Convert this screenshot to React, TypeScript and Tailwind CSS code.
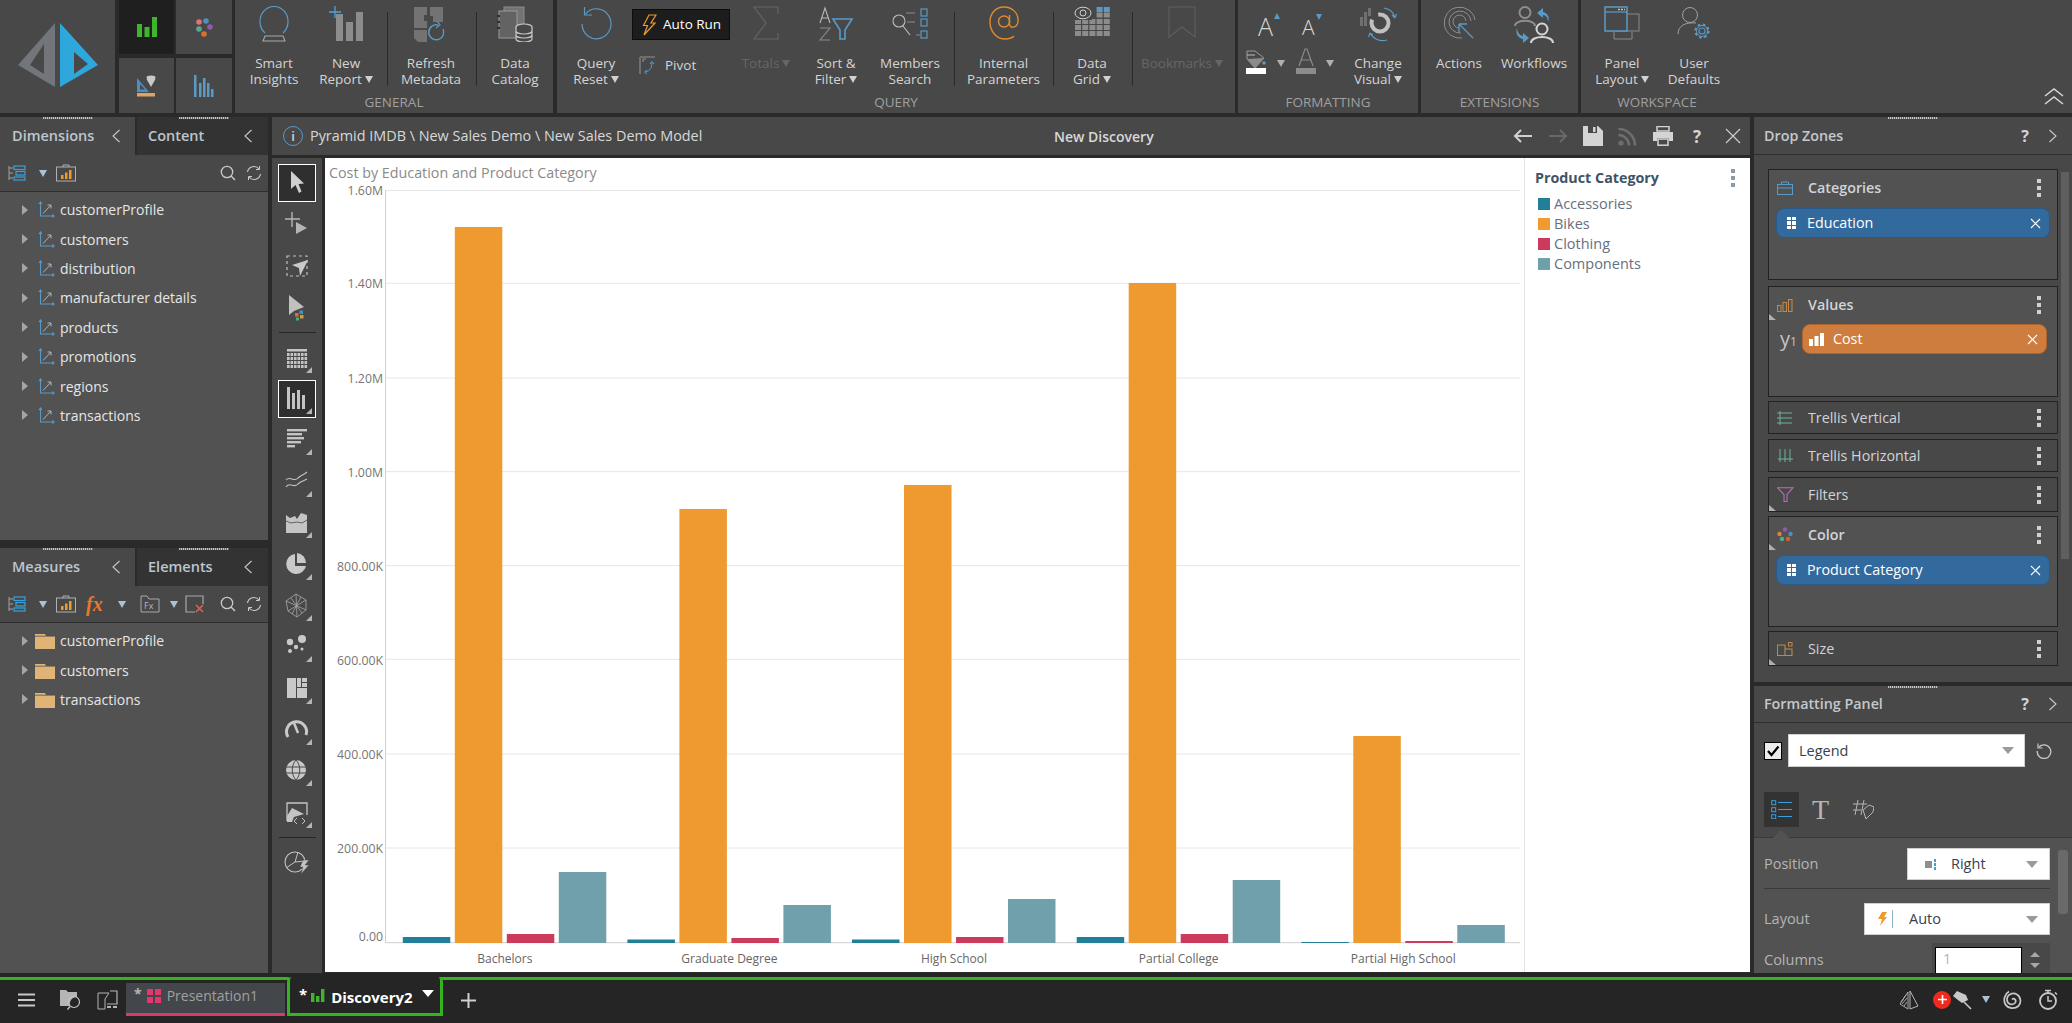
import React from "react";

const G = "#8c8c8c";
const B = "#5a9ac6";
const L = "#c9c9c9";

const Svg = ({ w = 36, h = 36, children, className = "" }: { w?: number; h?: number; children: React.ReactNode; className?: string }) => (
  <svg width={w} height={h} viewBox={`0 0 ${w} ${h}`} fill="none" className={className}>
    {children}
  </svg>
);

const Caret = ({ dim = false }: { dim?: boolean }) => (
  <span className={`ml-[3px] inline-block align-[1px] w-0 h-0 border-l-[4px] border-r-[4px] border-t-[7px] border-l-transparent border-r-transparent ${dim ? "border-t-[#666666]" : "border-t-[#d0d0d0]"}`} />
);

const Sep = ({ className }: { className: string }) => (
  <div className={`${className} flex justify-center pt-[12px]`}>
    <div className="w-[1px] h-[74px] bg-[#2a2a2a]" />
  </div>
);

const Item = ({ w, l1, l2, caret, icon, dim, ml = "" }: { w: string; l1: string; l2?: string; caret?: boolean; icon: React.ReactNode; dim?: boolean; ml?: string }) => (
  <div className={`${w} ${ml} flex flex-col items-center shrink-0`}>
    <div className="h-[55px] pt-[6px] flex justify-center">{icon}</div>
    <div className={`text-[13.5px] leading-[16px] text-center whitespace-nowrap ${dim ? "text-[#666666]" : "text-[#d4d4d4]"}`}>
      <div>
        {l1}
        {!l2 && caret && <Caret dim={dim} />}
      </div>
      {l2 && (
        <div>
          {l2}
          {caret && <Caret />}
        </div>
      )}
    </div>
  </div>
);

const Section = ({ w, label, children }: { w: string; label: string; children: React.ReactNode }) => (
  <div className={`${w} h-[113px] bg-[#484848] flex flex-col shrink-0`}>
    <div className="h-[92px] flex">{children}</div>
    <div className="h-[21px] text-center text-[13.5px] leading-[20px] text-[#a0a0a0]">{label}</div>
  </div>
);

const Bars = ({ fill, x = 0, y = 0 }: { fill: string; x?: number; y?: number }) => (
  <g fill={fill} transform={`translate(${x} ${y})`}>
    <rect x="0" y="7" width="5" height="13" />
    <rect x="7.5" y="10" width="5" height="10" />
    <rect x="15" y="0" width="5" height="20" />
  </g>
);

const TriCorner = () => <polygon points="30,30 30,24 24,30" fill="#b5b5b5" />;

const ToolBtn = ({ sel, children }: { sel?: boolean; children: React.ReactNode }) => (
  <div className={`w-[38px] h-[38px] mb-[3.4px] flex items-center justify-center shrink-0 ${sel ? "bg-[#2f2f2f] border border-white" : ""}`}>
    <Svg w={30} h={30}>{children}</Svg>
  </div>
);

const Grip = ({ className }: { className: string }) => (
  <div className={`absolute top-0 h-[2px] w-[50px] bg-[repeating-linear-gradient(90deg,#c4c4c4_0px,#c4c4c4_1px,#6a6a6a_1px,#6a6a6a_2px)] ${className}`} />
);

const Chevron = ({ dir = "left", color = "#c9c9c9" }: { dir?: "left" | "right"; color?: string }) => (
  <Svg w={10} h={16}>
    <path d={dir === "left" ? "M8.5 2 L2 8 L8.5 14" : "M1.5 2 L8 8 L1.5 14"} stroke={color} strokeWidth="1.1" />
  </Svg>
);

const TreeAxes = () => (
  <Svg w={17} h={17}>
    <path d="M2.5 1 V15 H16 M1 3 L2.5 1 L4 3 M14.5 13.5 L16 15 L14.5 16.5" stroke={B} strokeWidth="1.1" />
    <path d="M5 12.5 L13 4 M9.5 4 H13 V7.5" stroke="#a8b8c4" strokeWidth="1" />
  </Svg>
);

const TreeRow = ({ text, folder }: { text: string; folder?: boolean }) => (
  <div className="h-[29.4px] flex items-center text-[14px] text-[#e6e6e6] whitespace-nowrap">
    <div className="w-[22px] shrink-0" />
    <div className="w-0 h-0 border-t-[5px] border-b-[5px] border-l-[6px] border-t-transparent border-b-transparent border-l-[#a5a5a5] shrink-0" />
    {folder ? (
      <div className="ml-[7px] w-[25px] shrink-0">
        <Svg w={20} h={17}>
          <path d="M0 2 H10 L11 4 H20 V17 H0 Z" fill="#e0b377" />
          <path d="M0 4.2 H20" stroke="#525252" strokeWidth="0.8" />
        </Svg>
      </div>
    ) : (
      <div className="ml-[10px] w-[22px] shrink-0">
        <TreeAxes />
      </div>
    )}
    <span>{text}</span>
  </div>
);

const HierIcon = () => (
  <Svg w={18} h={16}>
    <path d="M1 1 V15 M1 3 H5 M1 8 H5 M1 13 H5" stroke="#a0a0a0" strokeWidth="1" />
    <rect x="6" y="1" width="11" height="3.5" stroke="#39a0dd" strokeWidth="1.2" />
    <rect x="8" y="6.5" width="9" height="3.5" stroke="#39a0dd" strokeWidth="1.2" />
    <rect x="6" y="12" width="11" height="3" stroke="#39a0dd" strokeWidth="1.2" />
  </Svg>
);

const CaseIcon = () => (
  <Svg w={20} h={18}>
    <path d="M7 3 V1 H13 V3" stroke="#b0b0b0" strokeWidth="1" />
    <rect x="0.5" y="3" width="19" height="14" stroke="#b0b0b0" strokeWidth="1" />
    <rect x="5" y="11" width="2.5" height="4" fill="#ec9b2c" />
    <rect x="9" y="8.5" width="2.5" height="6.5" fill="#ec9b2c" />
    <rect x="13" y="6" width="2.5" height="9" fill="#ec9b2c" />
  </Svg>
);

const SearchRefresh = () => (
  <>
    <div className="ml-auto">
      <Svg w={16} h={16}>
        <circle cx="7" cy="7" r="5.7" stroke={L} strokeWidth="1.3" />
        <path d="M11 11 L15 15" stroke={L} strokeWidth="1.4" />
      </Svg>
    </div>
    <div className="ml-[10px]">
      <Svg w={16} h={16}>
        <path d="M1.5 7 A6.5 6.5 0 0 1 13 4 M14.5 9 A6.5 6.5 0 0 1 3 12" stroke={L} strokeWidth="1.2" />
        <path d="M13.5 1 V4.5 H10 M2.5 15 V11.5 H6" stroke={L} strokeWidth="1" />
      </Svg>
    </div>
  </>
);

const DownTri = ({ color = "#a9c2d6" }: { color?: string }) => (
  <span className="inline-block w-0 h-0 border-l-[4px] border-r-[4px] border-t-[7px] border-l-transparent border-r-transparent" style={{ borderTopColor: color }} />
);

const PanelTabs = ({ a, b }: { a: string; b: string }) => (
  <div className="h-[38px] flex relative shrink-0">
    <Grip className="left-[43px]" />
    <Grip className="left-[179px]" />
    <div className="w-[135px] bg-[#484848] flex items-center pl-[12px] pr-[14px] justify-between">
      <span className="text-[14.5px] font-semibold text-[#bcc6ce]">{a}</span>
      <Chevron />
    </div>
    <div className="w-[2px] bg-[#2a2a2a]" />
    <div className="flex-1 bg-[#333333] flex items-center pl-[11px] pr-[15px] justify-between">
      <span className="text-[14.5px] font-semibold text-[#bcc6ce]">{b}</span>
      <Chevron />
    </div>
  </div>
);

const Kebab = ({ color = "#d0d0d0" }: { color?: string }) => (
  <div className="flex flex-col gap-[3px]">
    <div className="w-[4px] h-[4px]" style={{ background: color }} />
    <div className="w-[4px] h-[4px]" style={{ background: color }} />
    <div className="w-[4px] h-[4px]" style={{ background: color }} />
  </div>
);

const X = ({ s = 11 }: { s?: number }) => (
  <svg width={s} height={s} viewBox="0 0 11 11">
    <path d="M1 1 L10 10 M10 1 L1 10" stroke="#fff" strokeWidth="1.2" />
  </svg>
);

const Corner = () => (
  <svg width="7" height="6" viewBox="0 0 7 6" className="absolute left-0 bottom-0">
    <polygon points="0,0 7,6 0,6" fill="#b0b0b0" />
  </svg>
);

const Zone = ({ h, active, icon, label, children, corner, cornerClass }: { h: string; active?: boolean; icon: React.ReactNode; label: string; children?: React.ReactNode; corner?: boolean; cornerClass?: string }) => (
  <div className={`${h} w-[290px] relative border border-[#222222] ${active ? "bg-[#525252]" : "bg-[#484848]"}`}>
    <div className={`flex items-center pl-[8px] pr-[16px] ${active ? "h-[35px]" : "h-full"}`}>
      <div className="w-[31px] shrink-0 flex">{icon}</div>
      <span className={`text-[14.3px] text-[#d0d4d8] ${active ? "font-semibold" : ""}`}>{label}</span>
      <div className="ml-auto">
        <Kebab />
      </div>
    </div>
    {children}
    {corner && <Corner />}
    {cornerClass && (
      <svg width="7" height="6" viewBox="0 0 7 6" className={`absolute left-0 ${cornerClass}`}>
        <polygon points="0,0 7,6 0,6" fill="#b0b0b0" />
      </svg>
    )}
  </div>
);

const Chip = ({ text }: { text: string }) => (
  <div className="mx-[7px] mt-[3px] h-[30px] rounded-[8px] bg-[#326a9e] border border-[#2a5a88] flex items-center pl-[10px] pr-[8px] text-[14.3px] text-white">
    <div className="grid grid-cols-2 gap-[1px] w-[9px] mr-[11px] shrink-0">
      {[0, 1, 2, 3, 4, 5].map((i) => (
        <div key={i} className="h-[3.3px] bg-white" />
      ))}
    </div>
    <span>{text}</span>
    <div className="ml-auto">
      <X />
    </div>
  </div>
);

const SelectBox = ({ w, children }: { w: string; children: React.ReactNode }) => (
  <div className={`${w} h-[32px] bg-white border border-[#cfcfcf] flex items-center text-[14.5px] text-[#374151] shrink-0`}>
    {children}
    <div className="ml-auto mr-[11px]">
      <span className="block w-0 h-0 border-l-[6px] border-r-[6px] border-t-[7px] border-l-transparent border-r-transparent border-t-[#9a9a9a]" />
    </div>
  </div>
);

const series = ["#237e9a", "#ee9a2e", "#cc3a5c", "#70a0ac"];
const groups = [
  { name: "Bachelors", c: 504.8, tops: [937, 227, 934, 872] },
  { name: "Graduate Degree", c: 729.4, tops: [939.5, 509, 938, 905] },
  { name: "High School", c: 954, tops: [939.5, 485, 937, 899] },
  { name: "Partial College", c: 1178.7, tops: [937, 283, 934, 880] },
  { name: "Partial High School", c: 1403.3, tops: [942, 736, 941, 925] },
];
const ticks = [
  { t: "1.60M", g: 190.5, l: 190 },
  { t: "1.40M", g: 283.3, l: 283.5 },
  { t: "1.20M", g: 378, l: 378 },
  { t: "1.00M", g: 471.7, l: 472 },
  { t: "800.00K", g: 565.7, l: 566 },
  { t: "600.00K", g: 659.3, l: 660 },
  { t: "400.00K", g: 754, l: 754 },
  { t: "200.00K", g: 848, l: 848 },
  { t: "0.00", g: 942.7, l: 936 },
];

const Chart = () => (
  <svg width="1199" height="814" viewBox="325 158 1199 814" className="shrink-0 block">
    <text x="329" y="178" fontSize="14.3" fill="#8a8a8a">Cost by Education and Product Category</text>
    {ticks.map((t) => (
      <g key={t.t}>
        <line x1="386" x2="1520" y1={t.g} y2={t.g} stroke={t.t === "0.00" ? "#cfcfcf" : "#e6e6e6"} strokeWidth="1" />
        <text x="383" y={t.l + 4.5} fontSize="12.3" fill="#757575" textAnchor="end">{t.t}</text>
      </g>
    ))}
    <line x1="385.5" x2="385.5" y1="190" y2="943" stroke="#cfcfcf" />
    {groups.map((g) => (
      <g key={g.name}>
        {g.tops.map((top, i) => (
          <rect key={i} x={g.c - 102 + i * 52} y={top} width="47.5" height={943 - top} fill={series[i]} />
        ))}
        <text x={g.c} y="963" fontSize="12" fill="#666666" textAnchor="middle">{g.name}</text>
      </g>
    ))}
  </svg>
);

const Legend = () => (
  <div className="flex-1 border-l border-[#e4e4e4] pl-[10px] pr-[15px] pt-[10px] relative">
    <div className="flex items-center justify-between h-[20px]">
      <span className="text-[14.3px] font-bold text-[#3f5365]">Product Category</span>
      <Kebab color="#8a9aa8" />
    </div>
    <div className="mt-[6px]">
      {["Accessories", "Bikes", "Clothing", "Components"].map((n, i) => (
        <div key={n} className="h-[20px] flex items-center pl-[3px] text-[14.5px] text-[#667080]">
          <div className="w-[12px] h-[12px] mr-[4px]" style={{ background: series[i] }} />
          {n}
        </div>
      ))}
    </div>
  </div>
);

const HdrIcons = () => (
  <div className="flex items-center">
    <Svg w={20} h={16}>
      <path d="M19 8 H2 M8 2 L2 8 L8 14" stroke="#d0d0d0" strokeWidth="2" />
    </Svg>
    <div className="ml-[15px]">
      <Svg w={20} h={16}>
        <path d="M1 8 H18 M12 2 L18 8 L12 14" stroke="#686868" strokeWidth="2" />
      </Svg>
    </div>
    <div className="ml-[15px]">
      <Svg w={20} h={20}>
        <path d="M0 0 H15 L20 5 V20 H0 Z" fill="#d4d4d4" />
        <rect x="5" y="0" width="9" height="7" fill="#484848" />
        <rect x="10" y="1" width="2.5" height="5" fill="#d4d4d4" />
      </Svg>
    </div>
    <div className="ml-[15px]">
      <Svg w={20} h={20}>
        <circle cx="3" cy="17" r="2.6" fill="#6e6e6e" />
        <path d="M0.5 9 A10.5 10.5 0 0 1 11 19.5 M0.5 3 A16.5 16.5 0 0 1 17 19.5" stroke="#6e6e6e" strokeWidth="2.6" />
      </Svg>
    </div>
    <div className="ml-[15px]">
      <Svg w={20} h={20}>
        <path d="M4 0.5 H16 V5 H4 Z" stroke="#d4d4d4" strokeWidth="1.5" />
        <path d="M0 6 H20 V15 H16 V12 H4 V15 H0 Z" fill="#d4d4d4" />
        <rect x="5" y="13" width="10" height="6.2" stroke="#d4d4d4" strokeWidth="1.5" />
      </Svg>
    </div>
    <span className="ml-[20px] w-[12px] text-[17px] font-bold text-[#d4d4d4] leading-none">?</span>
    <div className="ml-[20px] mr-[9px]">
      <Svg w={16} h={16}>
        <path d="M1 1 L15 15 M15 1 L1 15" stroke="#d0d0d0" strokeWidth="1.1" />
      </Svg>
    </div>
  </div>
);

const HelpClose = () => (
  <div className="flex items-center">
    <span className="text-[16px] font-bold text-[#d4d4d4] leading-none">?</span>
    <div className="ml-[19px]">
      <Chevron dir="right" />
    </div>
  </div>
);

export default function App() {
  return (
    <div className="w-[2072px] h-[1023px] overflow-hidden bg-[#2a2a2a] flex flex-col font-['Open_Sans',sans-serif] select-none">
      {/* Ribbon */}
      <div className="h-[113px] mb-[4px] flex shrink-0">
        <div className="w-[115px] bg-[#484848] shrink-0 flex">
          <Svg w={115} h={113}>
            <path fillRule="evenodd" d="M55 23 L55 87 L18 65 Z M44 44 L30 65 L44 74 Z" fill="#72757a" />
            <path fillRule="evenodd" d="M60 23 L98 65 L60 87 Z M74 52 L74 74 L88 64 Z" fill="#2ea8dc" />
          </Svg>
        </div>
        <div className="w-[4px] shrink-0" />
        <div className="w-[113px] shrink-0 mr-[3px] grid grid-cols-[55px_56px] grid-rows-[54px_55px] gap-x-[2px] gap-y-[4px]">
          <div className="bg-[#1f1f1f] flex items-center justify-center">
            <Svg w={20} h={20}>
              <Bars fill="#3fb52f" />
            </Svg>
          </div>
          <div className="bg-[#484848] flex items-center justify-center">
            <Svg w={20} h={20}>
              <circle cx="5" cy="5" r="2.8" fill="#e0707a" />
              <circle cx="12" cy="4" r="2.8" fill="#4f8ec0" />
              <circle cx="16" cy="10" r="2.8" fill="#8e5bb0" />
              <circle cx="5" cy="12" r="2.8" fill="#5ba88c" />
              <circle cx="10" cy="17" r="2.8" fill="#d9702c" />
            </Svg>
          </div>
          <div className="bg-[#484848] flex items-center justify-center">
            <Svg w={22} h={22}>
              <path d="M1 17 L1 3 L13 17 Z M4 9 V14.5 H9 Z" fill="#4f8ec0" fillRule="evenodd" />
              <ellipse cx="15" cy="2.5" rx="4.5" ry="2" fill="#c9c9c9" />
              <path d="M10.5 4 L15 12 L19.5 4 Z" fill="#c9c9c9" />
              <rect x="1" y="18" width="18" height="3.5" fill="#d9a66a" />
            </Svg>
          </div>
          <div className="bg-[#484848] flex items-center justify-center">
            <Svg w={20} h={26}>
              <g fill="#5a9ac6">
                <rect x="0" y="2" width="2.5" height="22" />
                <rect x="5" y="10" width="2.5" height="14" />
                <rect x="9" y="5" width="2.5" height="19" />
                <rect x="13" y="10" width="2.5" height="14" />
                <rect x="17" y="16" width="2.5" height="8" />
              </g>
            </Svg>
          </div>
        </div>

        <Section w="w-[318px]" label="GENERAL">
          <Item w="w-[78px]" l1="Smart" l2="Insights" icon={
            <Svg>
              <path d="M9 27 A14 15 0 1 1 27 27" stroke={B} strokeWidth="1.2" />
              <path d="M9 30 H27 L29 35 H7 Z" stroke="#a8a8a8" strokeWidth="1.1" />
            </Svg>
          } />
          <Item w="w-[66px]" l1="New" l2="Report" caret icon={
            <Svg>
              <path d="M7 0 V12 M1 6 H13" stroke="#4da3dc" strokeWidth="1.3" />
              <rect x="8" y="8" width="7" height="27" fill={G} />
              <rect x="18" y="16" width="7" height="19" fill={G} />
              <rect x="28" y="6" width="7" height="29" fill={G} />
            </Svg>
          } />
          <Sep className="w-[16px]" />
          <Item w="w-[72px]" l1="Refresh" l2="Metadata" icon={
            <Svg>
              <path d="M1 1 H14 V9 H11 V15 H14 V22 H1 Z" fill="#737373" />
              <path d="M17 1 H30 V16 H20 V10 H17 Z" fill="#737373" />
              <path d="M1 24 H14 V36 H5 L1 32 Z" fill="#737373" />
              <path d="M30 23 A7.5 7.5 0 1 1 25 19" stroke={B} strokeWidth="1.4" />
              <path d="M24 15 L27 19 L23 22" stroke={B} strokeWidth="1.2" />
            </Svg>
          } />
          <Sep className="w-[18px]" />
          <Item w="w-[60px]" l1="Data" l2="Catalog" icon={
            <Svg>
              <rect x="7" y="1" width="20" height="30" fill="#737373" stroke="#8c8c8c" />
              <rect x="2" y="5" width="18" height="27" fill="#636363" stroke="#9a9a9a" />
              <g fill="#2f2f2f"><rect x="0" y="9" width="3" height="2" /><rect x="0" y="15" width="3" height="2" /><rect x="0" y="21" width="3" height="2" /></g>
              <ellipse cx="27" cy="21" rx="8" ry="3" fill="#484848" stroke="#c9c9c9" strokeWidth="1.2" />
              <path d="M19 21 V33 A8 3 0 0 0 35 33 V21 M19 25 A8 3 0 0 0 35 25 M19 29 A8 3 0 0 0 35 29" fill="#484848" stroke="#c9c9c9" strokeWidth="1.2" />
            </Svg>
          } />
        </Section>
        <div className="w-[4px] shrink-0" />

        <Section w="w-[678px]" label="QUERY">
          <Item w="w-[60px]" ml="ml-[9px]" l1="Query" l2="Reset" caret icon={
            <Svg w={32} h={34}>
              <path d="M5.5 8 A14.5 15 0 1 1 2 18" stroke={B} strokeWidth="1.2" />
              <path d="M4.5 1 V9 H12" stroke={B} strokeWidth="1.2" />
            </Svg>
          } />
          <div className="ml-[6px] w-[98px] shrink-0 flex flex-col">
            <div className="mt-[9px] h-[31px] bg-[#1d1d1d] border border-[#0d0d0d] flex items-center pl-[8px]">
              <Svg w={16} h={22}>
                <path d="M8 1 H15 L10 9 H14 L3 21 L6.5 11.5 H2.5 Z" stroke="#ec9b2c" strokeWidth="1.2" />
              </Svg>
              <span className="ml-[6px] text-[13.5px] text-white">Auto Run</span>
            </div>
            <div className="mt-[15px] pl-[7px] flex items-center">
              <Svg w={17} h={19}>
                <path d="M1 1 H16 M1 1 V18 M4 3 H7 M4 3 V6" stroke="#7a7a7a" strokeWidth="1.6" />
                <path d="M13 6 C13 12 11 15 6 16 M11 8 L13 5.5 L15 8 M8 14 L5.5 16 L8 18" stroke={B} strokeWidth="1" />
              </Svg>
              <span className="ml-[9px] text-[13.5px] text-[#d4d4d4]">Pivot</span>
            </div>
          </div>
          <Item w="w-[72px]" l1="Totals" caret dim icon={
            <Svg w={26} h={34}>
              <path d="M25 8 V1 H1 L13 17 L1 33 H25 V27" stroke="#646464" strokeWidth="1.2" />
            </Svg>
          } />
          <Item w="w-[68px]" l1="Sort &" l2="Filter" caret icon={
            <Svg w={36} h={36}>
              <path d="M2 17 L7 2 L12 17 M4 12 H10" stroke="#b8b8b8" strokeWidth="1.1" />
              <path d="M2 22 H12 L2 34 H12" stroke="#8a8a8a" strokeWidth="1.1" />
              <path d="M15 13 H34 L27 24 V33 H22 V24 Z" stroke={B} strokeWidth="1.6" />
            </Svg>
          } />
          <Item w="w-[80px]" l1="Members" l2="Search" icon={
            <Svg w={36} h={36}>
              <circle cx="7" cy="15" r="6" stroke="#bcbcbc" strokeWidth="1.1" />
              <path d="M11 20 L18 29" stroke="#bcbcbc" strokeWidth="1.2" />
              <path d="M14 7 H23 M15 16 H23 M24 29 H28" stroke="#8a8a8a" strokeWidth="1.2" />
              <rect x="29" y="3" width="6" height="7" stroke={B} strokeWidth="1.2" />
              <rect x="29" y="13" width="6" height="7" stroke={B} strokeWidth="1.2" />
              <rect x="29" y="25" width="6" height="7" stroke={B} strokeWidth="1.2" />
            </Svg>
          } />
          <Sep className="w-[8px]" />
          <Item w="w-[91px]" l1="Internal" l2="Parameters" icon={
            <Svg w={32} h={34}>
              <circle cx="16" cy="15.5" r="5.5" stroke="#e08a2c" strokeWidth="1.4" />
              <path d="M21.5 9 V18 C21.5 23 29 22 30 16 C31 7 24 1 16 1 C7 1 2 8 2 16 C2 26 9 33 17 33 C21 33 24 32 26 30" stroke="#e08a2c" strokeWidth="1.4" />
            </Svg>
          } />
          <Sep className="w-[8px]" />
          <Item w="w-[70px]" l1="Data" l2="Grid" caret icon={
            <Svg w={36} h={32}>
              <g fill={G}>
                {[0, 1, 2, 3].map((r) =>
                  [0, 1, 2, 3, 4].map((c) =>
                    r === 0 && c < 3 ? null : (
                      <rect key={`${r}-${c}`} x={1 + c * 7.2} y={r === 0 ? 1 : 7 + r * 6} width="6" height="5" fill={r === 0 ? B : G} />
                    )
                  )
                )}
                {[0, 1, 2, 3, 4].map((c) => (c > 2 ? <rect key={c} x={1 + c * 7.2} y="6.5" width="6" height="5" /> : null))}
              </g>
              <rect x="0" y="0" width="18" height="14" fill="#484848" />
              <ellipse cx="9" cy="7" rx="8" ry="5.8" stroke="#cfcfcf" strokeWidth="1" />
              <circle cx="9" cy="7" r="3" stroke="#cfcfcf" strokeWidth="1" />
            </Svg>
          } />
          <Sep className="w-[10px]" />
          <Item w="w-[90px]" l1="Bookmarks" caret dim icon={
            <Svg w={28} h={32}>
              <path d="M1 1 H27 V31 L14 21 L1 31 Z" stroke="#5e5e5e" strokeWidth="1.2" />
            </Svg>
          } />
        </Section>
        <div className="w-[3px] shrink-0" />

        <Section w="w-[180px]" label="FORMATTING">
          <div className="w-[104px] shrink-0 ml-[6px] flex flex-col">
            <div className="h-[40px] flex pt-[10px]">
              <div className="w-[44px] pl-[14px] flex items-start">
                <span className="text-[25px] leading-[32px] font-light text-[#d8d8d8]">A</span>
                <span className="mt-[3px] ml-[1px] block w-0 h-0 border-l-[3.5px] border-r-[3.5px] border-b-[6px] border-l-transparent border-r-transparent border-b-[#5a9ac6]" />
              </div>
              <div className="ml-[14px] flex items-start pt-[3px]">
                <span className="text-[21px] leading-[28px] font-light text-[#d8d8d8]">A</span>
                <span className="mt-[1px] ml-[1px] block w-0 h-0 border-l-[3.5px] border-r-[3.5px] border-t-[6px] border-l-transparent border-r-transparent border-t-[#5a9ac6]" />
              </div>
            </div>
            <div className="flex items-center mt-[8px]">
              <Svg w={24} h={26}>
                <path d="M3 3 H11 L20 10 L11 20 L3 11 Z" stroke="#9a9a9a" strokeWidth="1" />
                <path d="M3 11 L11 20 L20 10 Z" fill="#8c8c8c" />
                <path d="M3 7 H11" stroke="#bbb" />
                <circle cx="20" cy="15" r="1.8" fill={B} />
                <rect x="2" y="20" width="20" height="6" fill="#ffffff" />
              </Svg>
              <div className="ml-[9px]"><DownTri color="#b0b0b0" /></div>
              <div className="ml-[10px]">
                <Svg w={22} h={26}>
                  <path d="M4 18 L10 1 H12 L18 18 M6 12 H16" stroke="#8a8a8a" strokeWidth="1.2" />
                  <rect x="1" y="20" width="20" height="6" fill="#8c8c8c" />
                </Svg>
              </div>
              <div className="ml-[9px]"><DownTri color="#b0b0b0" /></div>
            </div>
          </div>
          <Item w="w-[60px]" l1="Change" l2="Visual" caret icon={
            <Svg w={38} h={36}>
              <circle cx="21" cy="17" r="8.5" stroke="#c0c0c0" strokeWidth="4" strokeDasharray="30 8" />
              <rect x="1" y="11" width="3" height="9" fill="#707070" />
              <rect x="5" y="6" width="3" height="14" fill="#707070" />
              <rect x="9" y="2" width="3" height="8" fill="#707070" />
              <path d="M25 2 C31 3 35 7 36 12 M36 12 L33 9 M36 12 L37.5 8" stroke={B} strokeWidth="1.1" />
              <path d="M28 34 C21 36 14 33 11 27 M11 27 L14 29 M11 27 L9.5 31" stroke={B} strokeWidth="1.1" />
            </Svg>
          } />
        </Section>
        <div className="w-[3px] shrink-0" />

        <Section w="w-[157px]" label="EXTENSIONS">
          <Item w="w-[56px]" ml="ml-[10px]" l1="Actions" icon={
            <Svg w={34} h={34}>
              <path d="M20 32 A15.5 15.5 0 1 1 33 14" stroke="#8e8e8e" strokeWidth="1" />
              <path d="M19 27 A11 11 0 1 1 29 15" stroke="#8e8e8e" strokeWidth="1" />
              <path d="M17 22 A6.5 6.5 0 1 1 24 15" stroke="#8e8e8e" strokeWidth="1" />
              <path d="M17 18 L31 32 M17 18 V26 M17 18 H25" stroke={B} strokeWidth="1.3" />
            </Svg>
          } />
          <Item w="w-[78px]" ml="ml-[8px]" l1="Workflows" icon={
            <Svg w={40} h={38}>
              <circle cx="11" cy="6.5" r="5.5" stroke="#8e8e8e" strokeWidth="2" />
              <path d="M1 20 C1 13 21 13 21 20" stroke="#8e8e8e" strokeWidth="2" />
              <circle cx="28" cy="23" r="5.5" stroke="#d4d4d4" strokeWidth="2" />
              <path d="M17 37 C17 29 39 29 39 37" stroke="#d4d4d4" strokeWidth="2" />
              <path d="M34 16 C36 12 34 7 29 6 V2 L23 7 L29 12 V9 C32 9 34 12 34 16 Z" fill={B} />
              <path d="M3 22 C1 27 4 32 9 33 V37 L15 32 L9 27 V30 C6 30 3 26 3 22 Z" fill={B} />
            </Svg>
          } />
        </Section>
        <div className="w-[3px] shrink-0" />

        <div className="flex-1 flex bg-[#484848]">
          <Section w="w-[152px]" label="WORKSPACE">
            <Item w="w-[60px]" ml="ml-[11px]" l1="Panel" l2="Layout" caret icon={
              <Svg w={36} h={34}>
                <path d="M10 23 V33 H28 V26 M13 25 H20" stroke="#8a8a8a" strokeWidth="1" />
                <rect x="13" y="8" width="22" height="17" stroke="#8a8a8a" strokeWidth="1" />
                <rect x="1" y="1" width="22" height="24" fill="#484848" stroke={B} strokeWidth="1.5" />
                <path d="M1 6 H23" stroke={B} strokeWidth="1.2" />
                <path d="M14 3.5 H21" stroke="#c0c0c0" strokeDasharray="2 1" strokeWidth="1.4" />
              </Svg>
            } />
            <Item w="w-[84px]" l1="User" l2="Defaults" icon={
              <Svg w={34} h={34}>
                <circle cx="13" cy="9" r="7.5" stroke="#a0a0a0" strokeWidth="1" />
                <path d="M1 28 C1 20 8 16 19 17" stroke="#a0a0a0" strokeWidth="1" />
                <circle cx="25" cy="25" r="3" stroke={B} strokeWidth="1.1" />
                <circle cx="25" cy="25" r="6.5" stroke={B} strokeWidth="2.2" strokeDasharray="2.6 2.5" />
                <circle cx="25" cy="25" r="5.5" stroke={B} strokeWidth="1" />
              </Svg>
            } />
          </Section>
          <div className="flex-1 flex items-end justify-end pr-[8px] pb-[8px]">
            <Svg w={20} h={17}>
              <path d="M1 8 L10 1 L19 8 M1 16 L10 9 L19 16" stroke="#d8d8d8" strokeWidth="1.5" />
            </Svg>
          </div>
        </div>
      </div>

      {/* Main */}
      <div className="h-[856px] flex shrink-0 gap-[4px]">
        {/* Left */}
        <div className="w-[268px] flex flex-col shrink-0">
          <div className="h-[423px] flex flex-col">
            <PanelTabs a="Dimensions" b="Content" />
            <div className="h-[37px] bg-[#484848] border-b border-[#2e2e2e] flex items-center pl-[8px] pr-[6px] shrink-0">
              <HierIcon />
              <div className="ml-[13px] mr-[9px] flex"><DownTri /></div>
              <CaseIcon />
              <SearchRefresh />
            </div>
            <div className="flex-1 bg-[#525252] pt-[3px]">
              {["customerProfile", "customers", "distribution", "manufacturer details", "products", "promotions", "regions", "transactions"].map((t) => (
                <TreeRow key={t} text={t} />
              ))}
            </div>
          </div>
          <div className="h-[8px]" />
          <div className="h-[425px] flex flex-col">
            <PanelTabs a="Measures" b="Elements" />
            <div className="h-[37px] bg-[#484848] border-b border-[#2e2e2e] flex items-center pl-[8px] pr-[6px] shrink-0">
              <HierIcon />
              <div className="ml-[13px] mr-[9px] flex"><DownTri /></div>
              <CaseIcon />
              <span className="ml-[10px] w-[21px] text-[20px] leading-none italic font-bold text-[#e8782c] font-['Liberation_Serif',serif]">fx</span>
              <div className="ml-[11px] mr-[14px] flex"><DownTri /></div>
              <Svg w={20} h={18}>
                <path d="M1 17 V1 H7 L9 4 H19 V17 Z" stroke="#a8a8a8" strokeWidth="1" />
                <text x="4" y="14" fontSize="9" fill="#b8b8b8">Fx</text>
              </Svg>
              <div className="ml-[10px] mr-[7px] flex"><DownTri /></div>
              <Svg w={19} h={18}>
                <path d="M10 17 H1 V1 H18 V9" stroke="#a8a8a8" strokeWidth="1.2" />
                <path d="M11 10 L18 17 M18 10 L11 17" stroke="#e0654f" strokeWidth="1.5" />
              </Svg>
              <SearchRefresh />
            </div>
            <div className="flex-1 bg-[#525252] pt-[3px]">
              {["customerProfile", "customers", "transactions"].map((t) => (
                <TreeRow key={t} text={t} folder />
              ))}
            </div>
          </div>
        </div>

        {/* Center */}
        <div className="w-[1478px] flex flex-col shrink-0">
          <div className="h-[38px] bg-[#484848] flex items-center relative shrink-0">
            <div className="ml-[11px] w-[20px] h-[20px] rounded-full border border-[#5a9ac6] flex items-center justify-center text-[13px] font-semibold text-[#d4d4d4] leading-none">i</div>
            <span className="ml-[7px] text-[14.4px] text-[#d8d8d8] whitespace-nowrap">Pyramid IMDB \ New Sales Demo \ New Sales Demo Model</span>
            <span className="absolute left-[782px] text-[14px] font-semibold text-[#d8d8d8] whitespace-nowrap">New Discovery</span>
            <div className="ml-auto">
              <HdrIcons />
            </div>
          </div>
          <div className="h-[3px] shrink-0" />
          <div className="flex-1 flex gap-[3px] min-h-0">
            <div className="w-[50px] bg-[#484848] pt-[6px] flex flex-col items-center shrink-0">
              <ToolBtn sel>
                <path d="M9 3 L9 21 L13.5 17 L17 25 L19.5 23.5 L16.5 16 L22 15.5 Z" fill="#d0d0d0" />
              </ToolBtn>
              <ToolBtn>
                <path d="M10 3 V18 M3 10 H18" stroke="#b5b5b5" strokeWidth="1.4" />
                <path d="M14 13 L25 19 L14 25 Z" fill="#b5b5b5" />
              </ToolBtn>
              <ToolBtn>
                <path d="M5 5 H25 V25 H5 Z" stroke="#c0c0c0" strokeWidth="1.2" strokeDasharray="3 3" />
                <path d="M26 9 L10 14 L17 17 L18 25 Z" fill="#c9c9c9" />
              </ToolBtn>
              <ToolBtn>
                <path d="M7 3 L7 23 L12 19 L22 15 Z" fill="#c0c0c0" />
                <rect x="13" y="21" width="3.5" height="3.5" fill="#d9702c" />
                <rect x="17.5" y="18.5" width="3.5" height="3.5" fill="#4f8ec0" />
                <rect x="14" y="25.5" width="3" height="3" fill="#3fb07f" />
                <rect x="18" y="23" width="3.5" height="3.5" fill="#d0a040" />
              </ToolBtn>
              <div className="mt-[2px] mb-[6px] w-[37px] h-[1px] bg-[#262626]" />
              <ToolBtn>
                <g fill="#c4c4c4">
                  <rect x="5" y="6" width="20" height="2.5" />
                  {[0, 1, 2, 3].map((r) =>
                    [0, 1, 2, 3, 4, 5].map((c) => <rect key={`${r}${c}`} x={5 + c * 3.5} y={10 + r * 4} width="2.6" height="3" />)
                  )}
                </g>
                <TriCorner />
              </ToolBtn>
              <ToolBtn sel>
                <g fill="#c4c4c4">
                  <rect x="5" y="3" width="3" height="22" />
                  <rect x="10" y="9" width="3" height="16" />
                  <rect x="15" y="6" width="3" height="19" />
                  <rect x="20" y="11" width="3" height="14" />
                </g>
                <TriCorner />
              </ToolBtn>
              <ToolBtn>
                <g fill="#c4c4c4">
                  <rect x="5" y="4" width="20" height="2.4" />
                  <rect x="5" y="8" width="15" height="2.4" />
                  <rect x="5" y="12" width="17" height="2.4" />
                  <rect x="5" y="16" width="14" height="2.4" />
                  <rect x="5" y="20" width="8" height="2.4" />
                </g>
                <TriCorner />
              </ToolBtn>
              <ToolBtn>
                <path d="M4 13 C8 8 12 16 16 11 C19 8 22 8 25 5 M4 20 C8 14 12 22 16 17 C19 14 22 14 25 12" stroke="#c4c4c4" strokeWidth="1.1" />
                <TriCorner />
              </ToolBtn>
              <ToolBtn>
                <path d="M4 7 L8 10 L13 8 L15 11 L19 5 L25 7 V25 H4 Z" fill="#c4c4c4" />
                <path d="M4 13 L9 15 L15 14 L20 15 L25 12" stroke="#484848" strokeWidth="0.8" />
                <TriCorner />
              </ToolBtn>
              <ToolBtn>
                <path d="M13 4 A10 10 0 1 0 24 16 H13 Z" fill="#c9c9c9" />
                <path d="M15 3 A10 10 0 0 1 24 13 H15 Z" fill="#c9c9c9" />
                <TriCorner />
              </ToolBtn>
              <ToolBtn>
                <path d="M14 3 L24 9 L24 19 L15 26 L6 20 L4 10 Z M14 3 L15 26 M4 10 L24 19 M24 9 L6 20 M9 7 L20 22 M19 6 L10 23" stroke="#a8a8a8" strokeWidth="0.8" />
                <TriCorner />
              </ToolBtn>
              <ToolBtn>
                <g fill="#c9c9c9">
                  <circle cx="20" cy="7" r="4" />
                  <circle cx="8" cy="10" r="3.2" />
                  <circle cx="14" cy="15" r="2.2" />
                  <circle cx="8" cy="19" r="2" />
                  <circle cx="20" cy="17" r="1.5" />
                </g>
                <TriCorner />
              </ToolBtn>
              <ToolBtn>
                <g fill="#c9c9c9">
                  <rect x="5" y="4" width="9" height="20" />
                  <rect x="15" y="4" width="4" height="9" />
                  <rect x="20" y="4" width="5" height="4" />
                  <rect x="20" y="9" width="5" height="4" />
                  <rect x="15" y="14" width="10" height="10" />
                </g>
                <TriCorner />
              </ToolBtn>
              <ToolBtn>
                <path d="M6 22 A10 10 0 1 1 24 20" stroke="#c9c9c9" strokeWidth="3" />
                <path d="M12 8 L16 18" stroke="#c9c9c9" strokeWidth="2.5" />
                <TriCorner />
              </ToolBtn>
              <ToolBtn>
                <circle cx="14" cy="14" r="10" fill="#c9c9c9" />
                <path d="M4 11 H24 M4 17 H24 M14 4 C9 9 9 19 14 24 C19 19 19 9 14 4 Z" stroke="#484848" strokeWidth="1" />
                <TriCorner />
              </ToolBtn>
              <ToolBtn>
                <path d="M5 23 V5 H25 V17" stroke="#c4c4c4" strokeWidth="1.3" />
                <path d="M5 18 L10 10 L22 16 L12 19 L10 24 H5 Z" fill="#c4c4c4" />
                <path d="M15 20 L12 23 L15 26 M20 20 L23 23 L20 26" stroke="#c4c4c4" strokeWidth="1" />
                <TriCorner />
              </ToolBtn>
              <div className="mt-[2px] mb-[6px] w-[37px] h-[1px] bg-[#262626]" />
              <ToolBtn>
                <circle cx="13" cy="14" r="10" stroke="#c4c4c4" strokeWidth="1.1" />
                <path d="M4 20 L13 14 L16 4 M13 14 L23 13" stroke="#c4c4c4" strokeWidth="1" />
                <path d="M21 12 H27 L23 17 H27 L19 26 L21 19 H18 Z" fill="#c4c4c4" stroke="#484848" strokeWidth="0.5" />
              </ToolBtn>
            </div>
            <div className="flex-1 h-[814px] bg-white border-b-0 flex">
              <Chart />
              <Legend />
            </div>
          </div>
        </div>

        {/* Right */}
        <div className="flex-1 flex flex-col min-w-0">
          <div className="h-[565px] bg-[#484848] flex flex-col relative shrink-0">
            <Grip className="left-[134px]" />
            <div className="h-[38px] border-b border-[#2e2e2e] flex items-center justify-between pl-[10px] pr-[14px] shrink-0">
              <span className="text-[14.3px] font-semibold text-[#c4c8cc]">Drop Zones</span>
              <HelpClose />
            </div>
            <div className="pt-[14px] pl-[14px] flex flex-col">
              <Zone h="h-[111px]" active label="Categories" icon={
                <Svg w={16} h={14}>
                  <rect x="0.5" y="3.5" width="15" height="10" stroke={B} />
                  <path d="M4.5 3 V1 H11.5 V3 M0.5 7 H15.5" stroke={B} />
                </Svg>
              }>
                <Chip text="Education" />
              </Zone>
              <div className="h-[6px]" />
              <Zone h="h-[111px]" active label="Values" cornerClass="top-[27px]" icon={
                <Svg w={16} h={14}>
                  <rect x="0.5" y="7.5" width="3.5" height="6" stroke="#c28a4a" />
                  <rect x="6" y="4.5" width="3.5" height="9" stroke="#c28a4a" />
                  <rect x="11.5" y="1.5" width="3.5" height="12" stroke="#c28a4a" />
                </Svg>
              }>
                <div className="flex items-center mt-[2px] pl-[11px]">
                  <span className="w-[22px] text-[20px] text-[#c4c4c4] leading-none">y<span className="text-[12px]">1</span></span>
                  <div className="w-[245px] h-[30px] rounded-[8px] bg-[#cf7d3f] border border-[#b0642c] flex items-center pl-[6px] pr-[8px] text-[14.3px] text-white">
                    <Svg w={15} h={13}>
                      <rect x="0" y="6" width="4" height="7" fill="#fff" />
                      <rect x="5.5" y="3" width="4" height="10" fill="#fff" />
                      <rect x="11" y="0" width="4" height="13" fill="#fff" />
                    </Svg>
                    <span className="ml-[9px]">Cost</span>
                    <div className="ml-auto"><X /></div>
                  </div>
                </div>
              </Zone>
              <div className="h-[4px]" />
              <Zone h="h-[33px]" label="Trellis Vertical" icon={
                <Svg w={16} h={14}>
                  <path d="M0 2 H15 M0 7 H15 M0 12 H15 M3 0 V14" stroke="#6bb59a" strokeWidth="1" />
                </Svg>
              } />
              <div className="h-[5px]" />
              <Zone h="h-[33px]" label="Trellis Horizontal" icon={
                <Svg w={16} h={14}>
                  <path d="M3 0 V13 M8 0 V13 M13 0 V13 M1 10 H16" stroke="#6bb59a" strokeWidth="1" />
                </Svg>
              } />
              <div className="h-[5px]" />
              <Zone h="h-[35px]" label="Filters" corner icon={
                <Svg w={17} h={15}>
                  <path d="M0.5 0.7 H16 L10 7.5 V14.5 H7 V7.5 Z" stroke="#b56fb5" strokeWidth="1.1" />
                </Svg>
              } />
              <div className="h-[4px]" />
              <Zone h="h-[111px]" active label="Color" cornerClass="top-[27px]" icon={
                <Svg w={16} h={15}>
                  <circle cx="8" cy="2.5" r="2.2" fill="#8e5bb0" />
                  <circle cx="2.5" cy="7" r="2.2" fill="#d9863c" />
                  <circle cx="13.5" cy="7" r="2.2" fill="#4f8ec0" />
                  <circle cx="5" cy="12" r="2.2" fill="#5ba88c" />
                  <circle cx="11" cy="12" r="2.2" fill="#d9602c" />
                </Svg>
              }>
                <Chip text="Product Category" />
              </Zone>
              <div className="h-[4px]" />
              <Zone h="h-[35px]" label="Size" corner icon={
                <Svg w={16} h={14}>
                  <path d="M0.5 3 H8 V13.5 H0.5 Z M8 7 H15 V13.5 H8" stroke="#b98a4a" strokeWidth="1.1" />
                  <rect x="11.5" y="0.5" width="3.5" height="3.5" stroke="#b98a4a" />
                </Svg>
              } />
            </div>
            <div className="absolute left-[307px] top-[55px] w-[8px] h-[387px] bg-[#5f5f5f]" />
          </div>
          <div className="h-[4px] shrink-0" />
          <div className="h-[287px] bg-[#484848] flex flex-col relative overflow-hidden">
            <Grip className="left-[134px]" />
            <div className="h-[37px] border-b border-[#2e2e2e] flex items-center justify-between pl-[10px] pr-[14px] shrink-0">
              <span className="text-[14.3px] font-semibold text-[#c4c8cc]">Formatting Panel</span>
              <HelpClose />
            </div>
            <div className="mt-[11px] pl-[10px] flex items-center shrink-0">
              <div className="w-[18px] h-[18px] bg-[#ececec] border border-black flex items-center justify-center">
                <Svg w={14} h={12}>
                  <path d="M2 6 L5.5 10 L12.5 1.5" stroke="#000" strokeWidth="2.2" />
                </Svg>
              </div>
              <div className="ml-[6px] w-[237px] h-[33px] bg-white border border-[#cfcfcf] flex items-center pl-[10px] pr-[10px] text-[14.5px] text-[#374151] justify-between">
                Legend
                <span className="block w-0 h-0 border-l-[6px] border-r-[6px] border-t-[7px] border-l-transparent border-r-transparent border-t-[#9a9a9a]" />
              </div>
              <div className="ml-[11px]">
                <Svg w={16} h={16}>
                  <path d="M3 4 A6.8 6.8 0 1 1 1.2 8" stroke={L} strokeWidth="1.3" />
                  <path d="M2 0.5 V5 H6.5" stroke={L} strokeWidth="1.2" />
                </Svg>
              </div>
            </div>
            <div className="mt-[25px] pl-[10px] flex items-center shrink-0">
              <div className="w-[35px] h-[35px] bg-[#333333] flex items-center justify-center">
                <Svg w={21} h={19}>
                  <rect x="0.7" y="0.7" width="4" height="4" stroke="#39a0dd" />
                  <rect x="0.7" y="7.7" width="4" height="4" stroke="#39a0dd" />
                  <rect x="0.7" y="14.7" width="4" height="4" stroke="#39a0dd" />
                  <path d="M7 2.5 H21 M7 9.5 H21 M7 16.5 H21" stroke="#39a0dd" />
                </Svg>
              </div>
              <span className="ml-[13px] text-[28px] leading-none text-[#b5b5b5] font-['Liberation_Serif',serif]">T</span>
              <div className="ml-[24px]">
                <Svg w={21} h={21}>
                  <path d="M5 1 L2 16 M11 1 L8 16 M0 5 H14 M0 11 H8" stroke="#b5b5b5" strokeWidth="1" />
                  <path d="M10 11 L16 6 L21 8 L20 13 L13 20 Z" stroke="#b5b5b5" strokeWidth="1" />
                </Svg>
              </div>
            </div>
            <div className="mt-[10px] flex-1 bg-[#525252] border-t border-[#3a3a3a] relative pl-[10px] pr-[22px] pt-[10px]">
              <div className="absolute left-[19px] -top-[8px] w-0 h-0 border-l-[8px] border-r-[8px] border-b-[8px] border-l-transparent border-r-transparent border-b-[#525252]" />
              <div className="flex items-center h-[32px]">
                <span className="text-[14.5px] text-[#b5b5b5]">Position</span>
                <div className="ml-auto">
                  <SelectBox w="w-[143px]">
                    <div className="ml-[17px] mr-[15px] flex items-center gap-[2px]">
                      <div className="w-[7px] h-[7px] bg-[#8f8f8f]" />
                      <div className="flex flex-col gap-[1px]">
                        <div className="w-[2px] h-[3px] bg-[#39a0dd]" />
                        <div className="w-[2px] h-[3px] bg-[#39a0dd]" />
                        <div className="w-[2px] h-[3px] bg-[#39a0dd]" />
                      </div>
                    </div>
                    Right
                  </SelectBox>
                </div>
              </div>
              <div className="mt-[8px] h-[1px] bg-[#3a3a3a]" />
              <div className="flex items-center h-[32px] mt-[14px]">
                <span className="text-[14.5px] text-[#b5b5b5]">Layout</span>
                <div className="ml-auto">
                  <SelectBox w="w-[186px]">
                    <div className="ml-[13px] mr-[16px] flex items-center gap-[5px]">
                      <Svg w={9} h={14}>
                        <path d="M4 0 H9 L6 5 H9 L2 14 L4 7 H0 Z" fill="#ec9b2c" />
                      </Svg>
                      <div className="w-[1px] h-[18px] bg-[#8fb8d0]" />
                    </div>
                    Auto
                  </SelectBox>
                </div>
              </div>
              <div className="flex items-start mt-[8px]">
                <span className="mt-[6px] text-[14.5px] text-[#b5b5b5]">Columns</span>
                <div className="ml-auto w-[118px] h-[40px] bg-[#484848] pl-[3px] pt-[4px] flex">
                  <div className="w-[87px] h-[36px] bg-white border border-black pl-[7px] text-[14.5px] text-[#b5b5b5]">1</div>
                  <div className="ml-[8px] pt-[5px] flex flex-col gap-[6px]">
                    <span className="block w-0 h-0 border-l-[5px] border-r-[5px] border-b-[5px] border-l-transparent border-r-transparent border-b-[#a8a8a8]" />
                    <span className="block w-0 h-0 border-l-[5px] border-r-[5px] border-t-[5px] border-l-transparent border-r-transparent border-t-[#a8a8a8]" />
                  </div>
                </div>
              </div>
              <div className="absolute left-[304px] top-[12px] w-[10px] h-[64px] rounded-[3px] bg-[#6a6a6a]" />
            </div>
          </div>
        </div>
      </div>

      {/* Bottom bar */}
      <div className="h-[50px] bg-[#252525] relative flex items-start shrink-0 overflow-hidden">
        <div className="absolute left-0 top-[4px] w-[289px] h-[3px] bg-[#36b41e]" />
        <div className="absolute left-[440px] right-0 top-[4px] h-[3px] bg-[#36b41e]" />
        <div className="absolute left-[287px] top-[4px] w-[156px] h-[39px] border-[3px] border-t-0 border-[#36b41e] rounded-tl-[5px] rounded-tr-[5px] bg-transparent" />
        <div className="ml-[18px] mt-[20px]">
          <Svg w={17} h={14}>
            <path d="M0 1.5 H17 M0 7 H17 M0 12.5 H17" stroke="#c8c8c8" strokeWidth="2" />
          </Svg>
        </div>
        <div className="ml-[25px] mt-[16px]">
          <Svg w={21} h={21}>
            <path d="M0 1 H6 L8 3 H17 V8 A7 7 0 0 0 10 17 H0 Z" fill="#b5b5b5" />
            <circle cx="14" cy="13" r="5.5" stroke="#c4c4c4" strokeWidth="1.2" />
            <path d="M10 17.5 L7.5 20.5" stroke="#c4c4c4" strokeWidth="1.4" />
          </Svg>
        </div>
        <div className="ml-[16px] mt-[17px]">
          <Svg w={21} h={20}>
            <path d="M1 3 H12 L8 9 V19 H1 Z" stroke="#b5b5b5" strokeWidth="1" />
            <path d="M13 1 H20 V14 H10" stroke="#b5b5b5" strokeWidth="1.2" />
            <path d="M10 17 H14 M16 17 H20" stroke="#b5b5b5" strokeWidth="2" />
          </Svg>
        </div>
        <div className="ml-[8px] mt-[10px] w-[159px] h-[33px] bg-[#43464a] border-b-[3px] border-[#d83a6a] flex items-start shrink-0">
          <span className="ml-[8px] mt-[4px] text-[14px] leading-[14px] font-bold text-[#b5b5b5]">*</span>
          <div className="ml-[5px] mt-[6px] grid grid-cols-2 gap-[2px] w-[14px]">
            {[0, 1, 2, 3].map((i) => (
              <div key={i} className="h-[6px] bg-[#e8356e]" />
            ))}
          </div>
          <span className="ml-[6px] mt-[3px] text-[14px] leading-[20px] text-[#a0a0a0]">Presentation1</span>
        </div>
        <div className="ml-[14px] mt-[14px] flex items-start shrink-0">
          <span className="text-[15px] leading-[14px] font-bold text-white">*</span>
          <div className="ml-[4px] mt-[1px]">
            <Svg w={14} h={14}>
              <rect x="0" y="5" width="3.4" height="9" fill="#3fb52f" />
              <rect x="5" y="8" width="3.4" height="6" fill="#3fb52f" />
              <rect x="10" y="1" width="3.4" height="13" fill="#3fb52f" />
            </Svg>
          </div>
          <span className="ml-[6px] mt-[1px] text-[15px] leading-[18px] font-bold text-white">Discovery2</span>
          <span className="ml-[9px] mt-[3px] block w-0 h-0 border-l-[6px] border-r-[6px] border-t-[7px] border-l-transparent border-r-transparent border-t-white" />
        </div>
        <div className="ml-[27px] mt-[20px]">
          <Svg w={15} h={15}>
            <path d="M7.5 0 V15 M0 7.5 H15" stroke="#d0d0d0" strokeWidth="2" />
          </Svg>
        </div>
        <div className="ml-auto mr-[14px] mt-[16px] flex items-center">
          <Svg w={20} h={20}>
            <path d="M11 1 L19 16 L11 19 Z" stroke="#b8b8b8" strokeWidth="1" />
            <path d="M9 2 L1 14 L9 19 Z M7 5 L2 12 M8 8 L3 14 M8 12 L5 16" stroke="#b8b8b8" strokeWidth="0.9" />
          </Svg>
          <div className="ml-[14px] w-[18px] h-[18px] rounded-full bg-[#ee2a1e] flex items-center justify-center">
            <Svg w={9} h={9}>
              <path d="M4.5 0 V9 M0 4.5 H9" stroke="#fff" strokeWidth="1.6" />
            </Svg>
          </div>
          <div className="ml-[1px]">
            <Svg w={20} h={20}>
              <path d="M5 1 L14 5 L16 10 L10 13 L6 10 L1 6 Z" fill="#c9c9c9" />
              <path d="M12 12 L19 19" stroke="#c9c9c9" strokeWidth="1.6" />
            </Svg>
          </div>
          <div className="ml-[10px] flex"><DownTri /></div>
          <div className="ml-[13px]">
            <Svg w={19} h={19}>
              <path d="M9 9.5 C11 7.5 14 10 12 13 C9 16 4 14 4 9.5 C4 4.5 9.5 2 14 4.5 C18 7 18.5 12.5 15.5 16 C12 19 5 19 2.5 14.5 C0 10 1.5 4 6 1.5" stroke="#c9c9c9" strokeWidth="1.7" />
            </Svg>
          </div>
          <div className="ml-[17px]">
            <Svg w={19} h={21}>
              <circle cx="9" cy="12" r="8" stroke="#c9c9c9" strokeWidth="1.8" />
              <path d="M6 1.5 H12 M9 1.5 V4 M9 7 V12 H13 M16 3.5 L18 5.5" stroke="#c9c9c9" strokeWidth="1.5" />
            </Svg>
          </div>
        </div>
      </div>
    </div>
  );
}
